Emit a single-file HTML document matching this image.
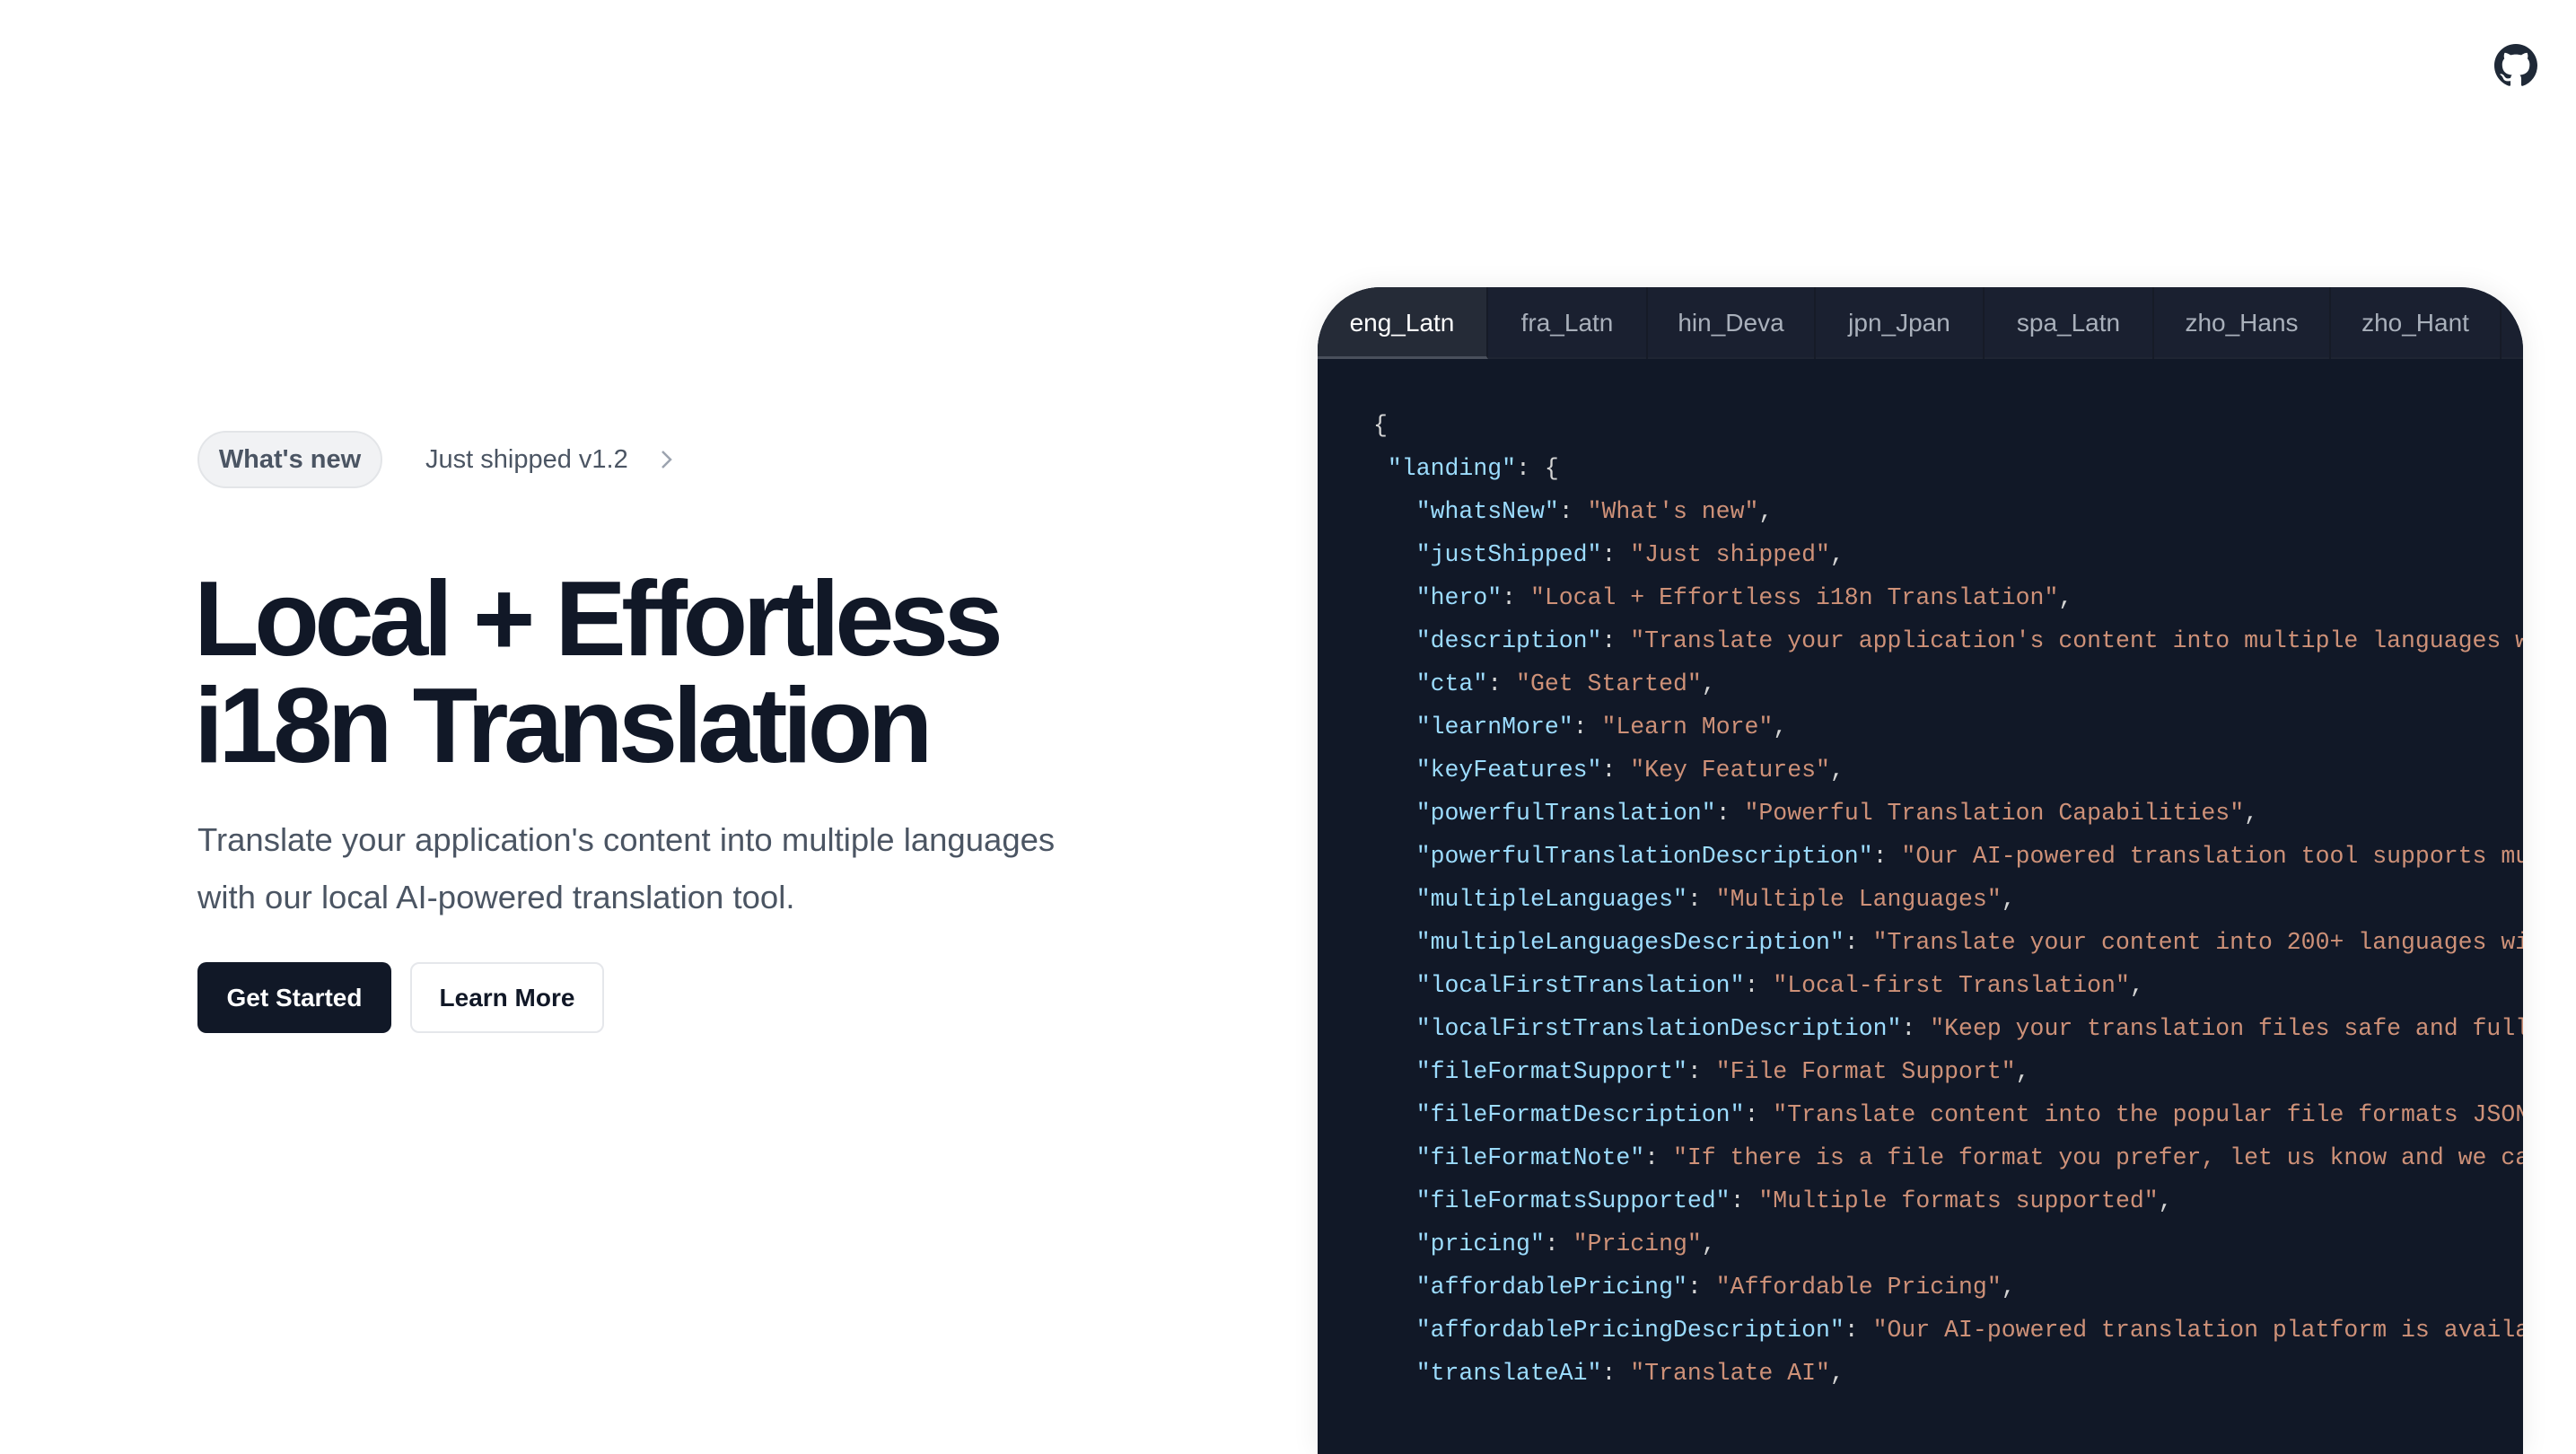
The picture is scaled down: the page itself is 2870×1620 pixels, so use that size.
<!DOCTYPE html>
<html><head><meta charset="utf-8"><style>
*{margin:0;padding:0;box-sizing:border-box}
html,body{width:2870px;height:1568px;overflow:hidden;background:#fff;font-family:"Liberation Sans",sans-serif}
.gh{position:absolute;left:2779px;top:49px;width:48px;height:48px}
.badge{position:absolute;left:220px;top:480px;width:206px;height:64px;border-radius:32px;background:#f1f2f4;border:2px solid #e3e5e8;color:#4b5563;font-size:29px;font-weight:bold;line-height:60px;text-align:center}
.ship{position:absolute;left:474px;top:480px;line-height:64px;font-size:29px;color:#4b5563}
.chev{position:absolute;left:730px;top:500px}
h1{position:absolute;left:216px;top:630px;font-size:119px;line-height:119px;font-weight:bold;color:#111827;letter-spacing:-5.5px}
p.d{position:absolute;left:220px;top:904px;font-size:36.5px;line-height:64px;color:#4b5563;width:975px}
.b1{position:absolute;left:220px;top:1072px;width:216px;height:79px;border-radius:10px;background:#111827;color:#fff;font-size:28px;font-weight:bold;line-height:79px;text-align:center}
.b2{position:absolute;left:457px;top:1072px;width:216px;height:79px;border-radius:10px;border:2px solid #e5e7eb;color:#111827;font-size:28px;font-weight:bold;line-height:75px;text-align:center}
.panel{position:absolute;left:1468px;top:320px;width:1343px;height:1300px;border-radius:70px 70px 0 0;background:#111827;overflow:hidden;box-shadow:0 0 30px rgba(0,0,0,.08)}
.tabs{height:80px;background:#1a2030;display:flex;border-bottom:2px solid #1f2533}
.tab{height:80px;line-height:80px;text-align:center;color:#a9b0bb;font-size:28px;border-right:2px solid #161b27}
.tab.a{background:#252b37;color:#fff;border-bottom:3px solid #4a505c}
pre{position:absolute;left:62px;top:130px;font-family:"Liberation Mono",monospace;font-size:26.5px;line-height:48px;color:#d4d4d4;white-space:pre}
.k{color:#9cdcfe}.s{color:#ce9178}
</style></head><body>
<svg class="gh" viewBox="0 0 16 16"><path fill="#1f2937" d="M8 0C3.58 0 0 3.580 0 8c0 3.54 2.29 6.53 5.47 7.59.4.07.55-.17.55-.38 0-.19-.01-.82-.01-1.49-2.01.37-2.530-.49-2.690-.94-.09-.23-.48-.94-.82-1.13-.28-.15-.68-.52-.01-.53.63-.01 1.08.58 1.23.82.72 1.21 1.87.87 2.33.66.07-.52.28-.87.51-1.07-1.78-.2-3.64-.89-3.64-3.95 0-.87.31-1.59.82-2.15-.08-.2-.36-1.02.08-2.12 0 0 .67-.21 2.2.82.64-.18 1.32-.27 2-.27.68 0 1.36.09 2 .27 1.53-1.04 2.2-.82 2.2-.82.44 1.1.16 1.92.08 2.12.51.56.82 1.27.82 2.15 0 3.07-1.87 3.75-3.650 3.95.29.25.54.73.54 1.48 0 1.07-.01 1.93-.01 2.2 0 .21.15.46.55.38A8.013 8.013 0 0016 8c0-4.42-3.58-8-8-8z"/></svg>
<div class="badge">What's new</div>
<div class="ship">Just shipped v1.2</div>
<svg class="chev" width="24" height="24" viewBox="0 0 24 24"><path d="M8 3l9 9-9 9" fill="none" stroke="#9ca3af" stroke-width="2.5"/></svg>
<h1>Local + Effortless<br>i18n Translation</h1>
<p class="d">Translate your application's content into multiple languages with our local AI-powered translation tool.</p>
<div class="b1">Get Started</div>
<div class="b2">Learn More</div>
<div class="panel">
<div class="tabs">
<div class="tab a" style="width:190px">eng_Latn</div>
<div class="tab" style="width:178px">fra_Latn</div>
<div class="tab" style="width:187px">hin_Deva</div>
<div class="tab" style="width:188px">jpn_Jpan</div>
<div class="tab" style="width:189px">spa_Latn</div>
<div class="tab" style="width:197px">zho_Hans</div>
<div class="tab" style="width:190px">zho_Hant</div>
</div>
<pre>{
 <span class="k">"landing"</span>: {
   <span class="k">"whatsNew"</span>: <span class="s">"What's new"</span>,
   <span class="k">"justShipped"</span>: <span class="s">"Just shipped"</span>,
   <span class="k">"hero"</span>: <span class="s">"Local + Effortless i18n Translation"</span>,
   <span class="k">"description"</span>: <span class="s">"Translate your application's content into multiple languages with our local AI-powered translation tool."</span>,
   <span class="k">"cta"</span>: <span class="s">"Get Started"</span>,
   <span class="k">"learnMore"</span>: <span class="s">"Learn More"</span>,
   <span class="k">"keyFeatures"</span>: <span class="s">"Key Features"</span>,
   <span class="k">"powerfulTranslation"</span>: <span class="s">"Powerful Translation Capabilities"</span>,
   <span class="k">"powerfulTranslationDescription"</span>: <span class="s">"Our AI-powered translation tool supports multiple languages"</span>,
   <span class="k">"multipleLanguages"</span>: <span class="s">"Multiple Languages"</span>,
   <span class="k">"multipleLanguagesDescription"</span>: <span class="s">"Translate your content into 200+ languages with ease"</span>,
   <span class="k">"localFirstTranslation"</span>: <span class="s">"Local-first Translation"</span>,
   <span class="k">"localFirstTranslationDescription"</span>: <span class="s">"Keep your translation files safe and fully local"</span>,
   <span class="k">"fileFormatSupport"</span>: <span class="s">"File Format Support"</span>,
   <span class="k">"fileFormatDescription"</span>: <span class="s">"Translate content into the popular file formats JSON, YAML"</span>,
   <span class="k">"fileFormatNote"</span>: <span class="s">"If there is a file format you prefer, let us know and we can add it"</span>,
   <span class="k">"fileFormatsSupported"</span>: <span class="s">"Multiple formats supported"</span>,
   <span class="k">"pricing"</span>: <span class="s">"Pricing"</span>,
   <span class="k">"affordablePricing"</span>: <span class="s">"Affordable Pricing"</span>,
   <span class="k">"affordablePricingDescription"</span>: <span class="s">"Our AI-powered translation platform is available"</span>,
   <span class="k">"translateAi"</span>: <span class="s">"Translate AI"</span>,
</pre>
</div>
</body></html>
